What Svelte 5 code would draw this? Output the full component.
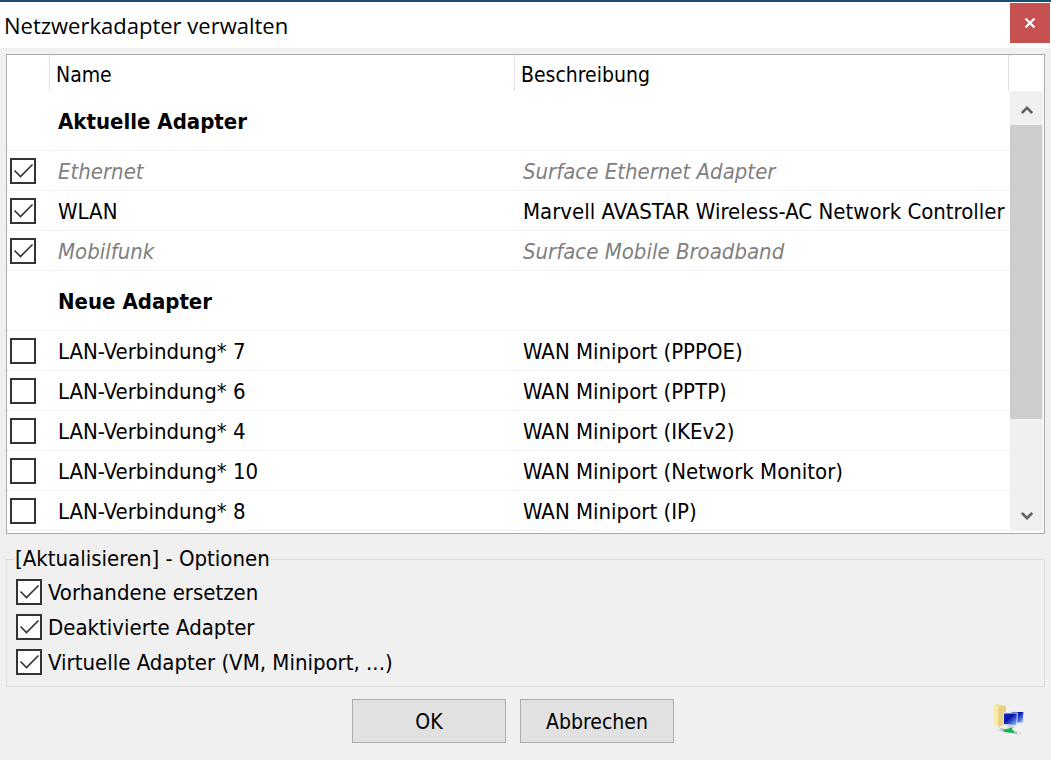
<script lang="ts">
  type Adapter = {
    name: string;
    description: string;
    checked: boolean;
    inactive?: boolean;
  };

  let groups = $state<{ title: string; adapters: Adapter[] }[]>([
    {
      title: "Aktuelle Adapter",
      adapters: [
        { name: "Ethernet", description: "Surface Ethernet Adapter", checked: true, inactive: true },
        { name: "WLAN", description: "Marvell AVASTAR Wireless-AC Network Controller", checked: true },
        { name: "Mobilfunk", description: "Surface Mobile Broadband", checked: true, inactive: true },
      ],
    },
    {
      title: "Neue Adapter",
      adapters: [
        { name: "LAN-Verbindung* 7", description: "WAN Miniport (PPPOE)", checked: false },
        { name: "LAN-Verbindung* 6", description: "WAN Miniport (PPTP)", checked: false },
        { name: "LAN-Verbindung* 4", description: "WAN Miniport (IKEv2)", checked: false },
        { name: "LAN-Verbindung* 10", description: "WAN Miniport (Network Monitor)", checked: false },
        { name: "LAN-Verbindung* 8", description: "WAN Miniport (IP)", checked: false },
      ],
    },
  ]);

  let options = $state([
    { label: "Vorhandene ersetzen", checked: true },
    { label: "Deaktivierte Adapter", checked: true },
    { label: "Virtuelle Adapter (VM, Miniport, ...)", checked: true },
  ]);
</script>

<div class="dialog">
  <header class="titlebar">
    <h1>Netzwerkadapter verwalten</h1>
    <button class="close" type="button" aria-label="Schließen">
      <svg width="12" height="10" viewBox="0 0 12 10">
        <path d="M1.5 0.5 L10.5 9.5 M10.5 0.5 L1.5 9.5" stroke="#fff" stroke-width="2.2" />
      </svg>
    </button>
  </header>

  <div class="list">
    <table>
      <colgroup>
        <col class="col-check" />
        <col class="col-name" />
        <col />
      </colgroup>
      <thead>
        <tr>
          <th></th>
          <th>Name</th>
          <th>Beschreibung</th>
        </tr>
      </thead>
      {#each groups as group}
        <tbody>
          <tr class="group">
            <td></td>
            <th colspan="2">{group.title}</th>
          </tr>
          {#each group.adapters as adapter}
            <tr class:inactive={adapter.inactive}>
              <td class="check">
                <input type="checkbox" bind:checked={adapter.checked} aria-label={adapter.name} />
              </td>
              <td>{adapter.name}</td>
              <td>{adapter.description}</td>
            </tr>
          {/each}
        </tbody>
      {/each}
    </table>
    <div class="scrollbar">
      <button type="button" aria-label="Nach oben">
        <svg width="12" height="10" viewBox="0 0 12 10">
          <path d="M0.8 8 L6 2.8 L11.2 8" fill="none" stroke="#606060" stroke-width="2.6" />
        </svg>
      </button>
      <div class="track"><div class="thumb"></div></div>
      <button type="button" aria-label="Nach unten">
        <svg width="12" height="10" viewBox="0 0 12 10">
          <path d="M0.8 2 L6 7.2 L11.2 2" fill="none" stroke="#606060" stroke-width="2.6" />
        </svg>
      </button>
    </div>
  </div>

  <fieldset>
    <legend>[Aktualisieren] - Optionen</legend>
    {#each options as option}
      <label>
        <input type="checkbox" bind:checked={option.checked} />
        <span>{option.label}</span>
      </label>
    {/each}
  </fieldset>

  <footer>
    <div class="actions">
      <button type="button">OK</button>
      <button type="button">Abbrechen</button>
    </div>
    <svg class="network" width="34" height="36" viewBox="0 0 34 36">
      <defs>
        <linearGradient id="folder" x1="0" x2="1">
          <stop offset="0" stop-color="#fbf0b4" />
          <stop offset="1" stop-color="#e2c873" />
        </linearGradient>
        <linearGradient id="screen" x1="0" y1="0" x2="1" y2="1">
          <stop offset="0" stop-color="#1238c8" />
          <stop offset="0.4" stop-color="#0a10a8" />
          <stop offset="0.65" stop-color="#3a62d8" />
          <stop offset="1" stop-color="#b8d4f8" />
        </linearGradient>
      </defs>
      <path d="M1.500 2 L5 1 L14 3 L14 20 L6 24 L1.500 20 Z" fill="url(#folder)" />
      <path d="M6 5 L14 3 L14 20 L6 24 Z" fill="#e8d186" />
      <path d="M5.500 4.500 L5.500 23.500" stroke="#fff6cc" />
      <path d="M19 8.500 L32 8.500 L31 20 L19 20 Z" fill="url(#screen)" stroke="#e6eaf2" />
      <path d="M11.500 10 L25.500 10 L24.500 22.500 L11.500 21.500 Z" fill="url(#screen)" stroke="#d8dfec" />
      <path d="M16 22.500 L21 23 L23 25 L15 24.500 Z" fill="#c9ced4" />
      <path d="M7 26 L27 30.500" stroke="#bac4c8" stroke-width="3" stroke-linecap="round" />
      <path d="M11 27 L20 24.500 L20.500 27 L23 30 L12 29 Z" fill="#12b44c" />
      <circle cx="7" cy="26" r="1.500" fill="#e9eef0" />
      <circle cx="26.500" cy="30.500" r="1.500" fill="#e9eef0" />
    </svg>
  </footer>
</div>

<style>
  :global(body) {
    margin: 0;
    background: #f0f0f0;
  }
  .dialog {
    border-top: 2px solid #1b4f72;
    color: #000;
    font-family: Tahoma, "DejaVu Sans Condensed", sans-serif;
    font-size: 22px;
    line-height: 28px;
  }
  button {
    padding: 0;
    border: 0;
    color: inherit;
    font: inherit;
  }
  .titlebar {
    display: flex;
    justify-content: space-between;
    align-items: center;
    height: 46px;
    padding: 0 1px 0 4px;
    box-sizing: border-box;
    background: #fff;
  }
  h1 {
    margin: 0;
    font-family: "Segoe UI", "Open Sans", sans-serif;
    font-size: 22px;
    font-weight: 400;
  }
  .close {
    display: grid;
    place-items: center;
    width: 40px;
    height: 40px;
    margin-bottom: 4px;
    background: #c75050;
  }
  .list {
    display: flex;
    margin: 6px 6px 0;
    padding-bottom: 2px;
    border: 1px solid #a9a9b1;
    background: #fff;
  }
  table {
    flex: 1;
    border-collapse: separate;
    border-spacing: 0;
    table-layout: fixed;
  }
  .col-check {
    width: 43px;
  }
  .col-name {
    width: 465px;
  }
  th,
  td {
    box-sizing: border-box;
    height: 40px;
    padding: 2px 0 0 8px;
    border-bottom: 1px dotted #e8e8e8;
    text-align: left;
    white-space: nowrap;
  }
  thead th {
    height: 36px;
    padding: 3px 0 0 6px;
    border-right: 1px solid #e2e2e2;
    border-bottom: 0;
    font-size: 21px;
    font-weight: 400;
  }
  .group th,
  .group td {
    height: 60px;
  }
  .group th {
    font-weight: 700;
  }
  .inactive td {
    color: #808080;
    font-style: italic;
  }
  td.check {
    padding: 0 0 0 3px;
  }
  input {
    display: block;
    flex: none;
    appearance: none;
    width: 26px;
    height: 26px;
    margin: 0;
    border: 2px solid #333;
    background: #fff;
  }
  input:checked {
    background-image: url("data:image/svg+xml,%3Csvg xmlns='http://www.w3.org/2000/svg' viewBox='0 0 22 22'%3E%3Cpath d='M2.500 10.500 L8.500 16.500 L20.500 4.500' fill='none' stroke='%23333' stroke-width='1.600'/%3E%3C/svg%3E");
  }
  .scrollbar {
    display: flex;
    flex-direction: column;
    width: 33px;
    margin: 36px 1px 0;
    background: #f0f0f0;
  }
  .scrollbar button {
    display: grid;
    place-items: center;
    height: 34px;
    padding-top: 3px;
    background: none;
  }
  .track {
    flex: 1;
  }
  .thumb {
    width: 32px;
    height: 79%;
    background: #cdcdcd;
  }
  fieldset {
    display: flex;
    flex-direction: column;
    gap: 7px;
    margin: 11px 6px 0;
    padding: 5px 9px 10px;
    border: 1px solid #dcdcdc;
  }
  legend {
    margin-left: -2px;
    padding: 0 1px;
  }
  label {
    display: flex;
    align-items: center;
    gap: 6px;
    height: 28px;
  }
  label span {
    padding-top: 2px;
  }
  footer {
    display: grid;
    grid-template-columns: 1fr auto 1fr;
    align-items: center;
    padding: 12px 25px 17px 0;
  }
  .actions {
    display: flex;
    grid-column: 2;
    gap: 14px;
  }
  .actions button {
    width: 154px;
    height: 44px;
    padding-top: 1px;
    border: 1px solid #adadad;
    background: #e1e1e1;
    font-size: 21px;
  }
  .network {
    justify-self: end;
  }
</style>
